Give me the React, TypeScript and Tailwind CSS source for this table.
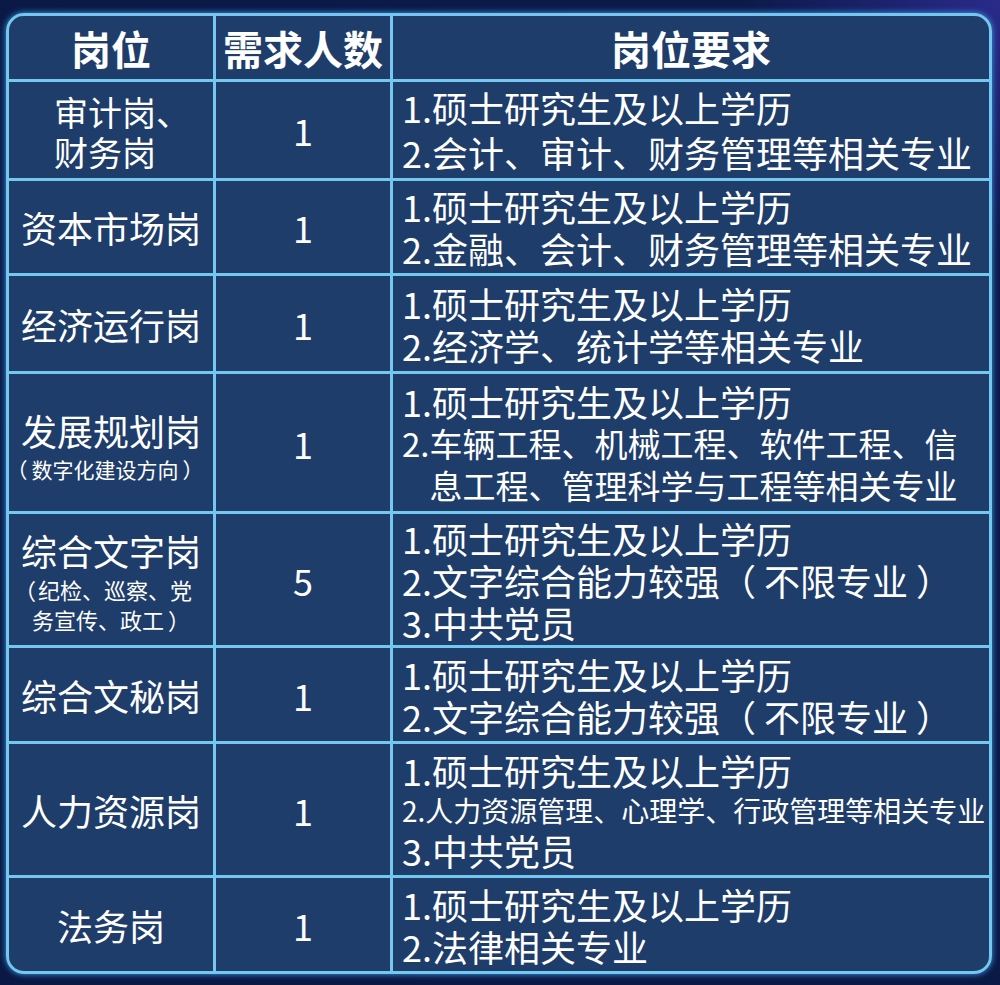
import React from "react";

const Cell = ({ children, className = "" }: { children?: React.ReactNode; className?: string }) => (
  <div className={`bg-[#1e3d6a] flex items-center ${className}`}>{children}</div>
);

const Num = ({ v }: { v: string }) => (
  <Cell className="justify-center text-[36px] leading-none">{v}</Cell>
);

const Req = ({ lines }: { lines: React.ReactNode[] }) => (
  <Cell className="pl-[9px] text-[36px] leading-[42px] whitespace-nowrap">
    <div>
      {lines.map((l, i) => (
        <div key={i}>{l}</div>
      ))}
    </div>
  </Cell>
);

const Pos = ({ children }: { children: React.ReactNode }) => (
  <Cell className="justify-center text-center text-[36px] leading-[42px] whitespace-nowrap">
    <div>{children}</div>
  </Cell>
);

const Wenzi = () => (
  <>
    2.文字综合能力较强（<span className="ml-[8px]">不限专业</span>
    <span className="ml-[8px]">）</span>
  </>
);

export default function App() {
  const deg = "1.硕士研究生及以上学历";
  return (
    <div className="w-[1000px] h-[985px] bg-[radial-gradient(ellipse_at_100%_0%,#2a2a8a_0%,#0c1a4a_18%,#0a1844_100%)] pt-[13px] pl-[6px] font-['Noto_Sans_CJK_SC',sans-serif] text-white">
      <div className="w-[986px] h-[961px] border-[3px] border-[#74c8ef] rounded-[18px] overflow-hidden shadow-[0_0_6px_#3aa0e8]">
        <div className="grid grid-cols-[204px_174px_596px] grid-rows-[63px_96px_92px_95px_137px_131px_93px_131px_93px] gap-[3px] bg-[#74c8ef] w-full h-full">
          {/* header */}
          <Cell className="justify-center text-[40px] font-bold leading-none">岗位</Cell>
          <Cell className="justify-center text-[40px] font-bold leading-none">需求人数</Cell>
          <Cell className="justify-center text-[40px] font-bold leading-none">岗位要求</Cell>

          {/* row 1 */}
          <Cell className="justify-center whitespace-nowrap">
            <div className="text-left text-[34px] leading-[40px] pl-[8px] pt-[4px]">
              <div>
                审计岗<span className="mr-[-14px]">、</span>
              </div>
              <div>财务岗</div>
            </div>
          </Cell>
          <Num v="1" />
          <Cell className="pl-[9px] text-[36px] leading-[45px] whitespace-nowrap">
            <div>
              <div>{deg}</div>
              <div>2.会计、审计、财务管理等相关专业</div>
            </div>
          </Cell>

          {/* row 2 */}
          <Pos>资本市场岗</Pos>
          <Num v="1" />
          <Req lines={[deg, "2.金融、会计、财务管理等相关专业"]} />

          {/* row 3 */}
          <Pos>经济运行岗</Pos>
          <Num v="1" />
          <Req lines={[deg, "2.经济学、统计学等相关专业"]} />

          {/* row 4 */}
          <Cell className="justify-center text-center whitespace-nowrap">
            <div className="pt-[6px]">
              <div className="text-[36px] leading-[44px]">发展规划岗</div>
              <div className="text-[21px] leading-[30px] mt-[2px] ml-[-12px]">
                （<span className="ml-[4px]">数字化建设方向</span>
                <span className="ml-[4px]">）</span>
              </div>
            </div>
          </Cell>
          <Num v="1" />
          <Cell className="pl-[9px] text-[36px] leading-[42px] whitespace-nowrap">
            <div>
              <div>{deg}</div>
              <div className="text-[33px]">2.车辆工程、机械工程、软件工程、信</div>
              <div className="text-[33px]">
                <span className="invisible">2.</span>息工程、管理科学与工程等相关专业
              </div>
            </div>
          </Cell>

          {/* row 5 */}
          <Cell className="justify-center text-center whitespace-nowrap">
            <div className="pt-[2px]">
              <div className="text-[36px] leading-[44px]">综合文字岗</div>
              <div className="text-[22px] leading-[30px] mt-[2px] ml-[-16px]">
                （<span className="ml-[2px]">纪检、巡察、党</span>
              </div>
              <div className="text-[22px] leading-[30px]">
                务宣传、政工<span className="ml-[4px]">）</span>
              </div>
            </div>
          </Cell>
          <Num v="5" />
          <Req lines={[deg, <Wenzi key="w" />, "3.中共党员"]} />

          {/* row 6 */}
          <Pos>综合文秘岗</Pos>
          <Num v="1" />
          <Req lines={[deg, <Wenzi key="w" />]} />

          {/* row 7 */}
          <Pos>人力资源岗</Pos>
          <Num v="1" />
          <Cell className="pl-[9px] text-[36px] leading-[40px] whitespace-nowrap">
            <div>
              <div>{deg}</div>
              <div className="text-[28px]">2.人力资源管理、心理学、行政管理等相关专业</div>
              <div>3.中共党员</div>
            </div>
          </Cell>

          {/* row 8 */}
          <Pos>法务岗</Pos>
          <Num v="1" />
          <Req lines={[deg, "2.法律相关专业"]} />
        </div>
      </div>
    </div>
  );
}
